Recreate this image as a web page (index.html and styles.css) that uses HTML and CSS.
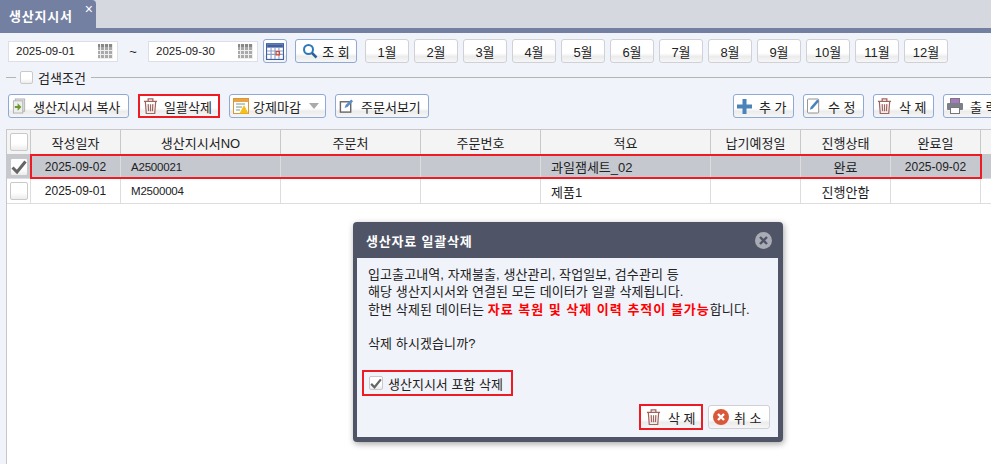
FILE: index.html
```html
<!DOCTYPE html>
<html lang="ko">
<head>
  <meta charset="UTF-8" />
  <meta name="viewport" content="width=device-width, initial-scale=1.0"/>
  <title>생산지시서</title>
  <link rel="stylesheet" href="styles.css">
</head>
<body>
  <svg class="icon-defs" width="0" height="0">
    <symbol id="i-trash" viewBox="0 0 16 18">
      <path d="M1 4h14M5.500 4V1.500h5V4M2.500 4.500l1 12.500h9l1-12.500M5.500 7l.4 7.500M8 7v7.500M10.500 7l-.4 7.500" fill="none" stroke="#a0645f" stroke-width="1.300"/>
    </symbol>
    <symbol id="i-cal" viewBox="0 0 16 16">
      <rect x="0.500" y="1.500" width="15" height="14" fill="#fff" stroke="#3f5f9f"/>
      <rect x="1" y="2" width="14" height="3" fill="#3f5f9f"/>
      <path d="M1 8h14M1 11h14M4.500 5v10M8 5v10M11.500 5v10" stroke="#8aa0c8" stroke-width="1"/>
      <rect x="9" y="8.500" width="3" height="3" fill="none" stroke="#d9472b"/>
    </symbol>
    <symbol id="i-edit" viewBox="0 0 16 16">
      <rect x="1.500" y="3.500" width="11" height="11" fill="#fff" stroke="#666" stroke-width="1.500"/>
      <path d="M6 10l1-3 6-6 2 2-6 6z" fill="#5b8dc9"/>
    </symbol>
    <symbol id="i-check" viewBox="0 0 16 14">
      <path d="M1.500 7.500l4.500 4.500L14.500 1.500" fill="none" stroke="#666" stroke-width="3"/>
    </symbol>
  </svg>

  <div class="tabbar">
    <div class="tab">생산지시서<span class="tab-close">×</span></div>
  </div>
  <div class="band"></div>

  <div class="search-row">
    <div class="date-field">2025-09-01<span class="grid-icon"></span></div>
    <span class="tilde">~</span>
    <div class="date-field">2025-09-30<span class="grid-icon"></span></div>
    <button class="btn btn-cal"><svg width="18" height="18"><use href="#i-cal"/></svg></button>
    <button class="btn btn-query">
      <svg width="16" height="16" viewBox="0 0 16 16"><circle cx="6.500" cy="6.500" r="4.500" fill="#fff" stroke="#2f78b7" stroke-width="2"/><path d="M10 10l4.500 4.500" stroke="#2f5f97" stroke-width="2.500"/></svg>
      조 회
    </button>
    <div class="months">
      <button class="btn month">1월</button>
      <button class="btn month">2월</button>
      <button class="btn month">3월</button>
      <button class="btn month">4월</button>
      <button class="btn month">5월</button>
      <button class="btn month">6월</button>
      <button class="btn month">7월</button>
      <button class="btn month">8월</button>
      <button class="btn month">9월</button>
      <button class="btn month">10월</button>
      <button class="btn month">11월</button>
      <button class="btn month">12월</button>
    </div>
  </div>

  <div class="condition">
    <span class="box"></span>
    <span>검색조건</span>
    <span class="condition-line"></span>
  </div>

  <div class="toolbar">
    <button class="btn tool w-copy">
      <svg width="15" height="16" viewBox="0 0 16 16"><rect x="3.500" y="0.500" width="10" height="13" fill="#e4e4e4" stroke="#b0b0b0"/><rect x="1.500" y="2.500" width="10" height="13" fill="#eee" stroke="#b0b0b0"/><path d="M3 8h3V5l4 4-4 4v-3H3z" fill="#6a9a2c"/></svg>
      생산지시서 복사
    </button>
    <button class="btn tool w-bulk marked"><svg width="15" height="18"><use href="#i-trash"/></svg>일괄삭제</button>
    <button class="btn tool w-close">
      <svg width="16" height="16" viewBox="0 0 16 16"><rect x="0.500" y="0.500" width="15" height="15" fill="#fff" stroke="#d9963a"/><rect x="1" y="1" width="14" height="3" fill="#e8a548"/><path d="M3 6h9M3 9h6M3 12h4" stroke="#7f9a80"/><path d="M11 7l4.500 8.500h-9z" fill="#f2c21a"/></svg>
      강제마감<span class="caret"></span>
    </button>
    <button class="btn tool w-order"><svg width="15" height="16"><use href="#i-edit"/></svg>주문서보기</button>
    <div class="toolbar-right">
      <button class="btn tool w-side">
        <svg width="15" height="15" viewBox="0 0 15 15"><path d="M5.500 0h4v5.500H15v4H9.500V15h-4V9.500H0v-4h5.500z" fill="#4a83ba"/></svg>
        추 가
      </button>
      <button class="btn tool w-side">
        <svg width="14" height="16" viewBox="0 0 15 16"><rect x="0.500" y="0.500" width="12" height="15" rx="1" fill="#fff" stroke="#8a8a8a"/><path d="M3 12l1-3 7-8 2 2-7 8z" fill="#4a83ba"/></svg>
        수 정
      </button>
      <button class="btn tool w-side"><svg width="15" height="18"><use href="#i-trash"/></svg>삭 제</button>
      <button class="btn tool w-print">
        <svg width="16" height="16" viewBox="0 0 16 16"><rect x="3.500" y="0.500" width="9" height="5" fill="#a878c0" stroke="#777"/><rect x="0" y="5" width="16" height="7" rx="1" fill="#7b7f88"/><rect x="3.500" y="9.500" width="9" height="6" fill="#fff" stroke="#777"/></svg>
        출 력
      </button>
    </div>
  </div>

  <div class="grid">
    <div class="row head">
      <div class="check-cell"><span class="box"></span></div>
      <div class="cells">
        <div class="cell c-date">작성일자</div>
        <div class="cell c-no">생산지시서NO</div>
        <div class="cell c-client">주문처</div>
        <div class="cell c-order">주문번호</div>
        <div class="cell c-memo">적요</div>
        <div class="cell c-due">납기예정일</div>
        <div class="cell c-state">진행상태</div>
        <div class="cell c-end">완료일</div>
      </div>
    </div>
    <div class="row selected">
      <div class="check-cell"><span class="box"><svg width="22" height="18"><use href="#i-check"/></svg></span></div>
      <div class="cells marked-row">
        <div class="cell c-date num">2025-09-02</div>
        <div class="cell c-no left code">A2500021</div>
        <div class="cell c-client"></div>
        <div class="cell c-order"></div>
        <div class="cell c-memo left">과일잼세트_02</div>
        <div class="cell c-due"></div>
        <div class="cell c-state">완료</div>
        <div class="cell c-end num">2025-09-02</div>
      </div>
    </div>
    <div class="row">
      <div class="check-cell"><span class="box"></span></div>
      <div class="cells">
        <div class="cell c-date num">2025-09-01</div>
        <div class="cell c-no left code">M2500004</div>
        <div class="cell c-client"></div>
        <div class="cell c-order"></div>
        <div class="cell c-memo left">제품1</div>
        <div class="cell c-due"></div>
        <div class="cell c-state">진행안함</div>
        <div class="cell c-end"></div>
      </div>
    </div>
  </div>

  <div class="dialog">
    <div class="dialog-head">
      <span>생산자료 일괄삭제</span>
      <svg width="17" height="17" viewBox="0 0 17 17"><circle cx="8.500" cy="8.500" r="8.500" fill="#a9abb5"/><path d="M5 5l7 7M12 5l-7 7" stroke="#4f5567" stroke-width="2.400"/></svg>
    </div>
    <div class="dialog-body">
      <p class="message">입고출고내역, 자재불출, 생산관리, 작업일보, 검수관리 등<br>
      해당 생산지시서와 연결된 모든 데이터가 일괄 삭제됩니다.<br>
      한번 삭제된 데이터는 <b class="warn">자료 복원 및 삭제 이력 추적이 불가능</b>합니다.<br>
      <br>
      삭제 하시겠습니까?</p>
      <label class="include">
        <span class="box small"><svg width="17" height="15"><use href="#i-check"/></svg></span>
        생산지시서 포함 삭제
      </label>
      <div class="dialog-foot">
        <button class="btn plain marked"><svg width="15" height="18"><use href="#i-trash"/></svg>삭 제</button>
        <button class="btn plain">
          <svg width="16" height="16" viewBox="0 0 16 16"><circle cx="8" cy="8" r="8" fill="#d9583a"/><path d="M5 5l6 6M11 5l-6 6" stroke="#fff" stroke-width="2.400"/></svg>
          취 소
        </button>
      </div>
    </div>
  </div>
</body>
</html>
```

FILE: styles.css
```css
html, body {
  height: 100%;
}

body {
  margin: 0;
  overflow: hidden;
  background-color: #f0f3f9;
  color: #222;
  font-family: "Liberation Sans", "Noto Sans CJK KR", sans-serif;
  font-size: 13px;
  position: relative;
  display: flex;
  flex-direction: column;
}

.icon-defs {
  position: absolute;
}

.tabbar {
  height: 28px;
  background-color: #d6d8e0;
  flex: none;
}

.tab {
  width: 96px;
  height: 28px;
  box-sizing: border-box;
  padding: 6px 0 0 9px;
  background-color: #7480a2;
  border-top-right-radius: 4px;
  color: #fff;
  font-weight: bold;
  letter-spacing: 0.8px;
  position: relative;
}

.tab-close {
  position: absolute;
  top: 0;
  right: 3px;
  font-size: 14px;
  font-weight: normal;
  letter-spacing: 0;
  line-height: 18px;
}

.band {
  height: 5px;
  background-color: #7480a2;
  flex: none;
}

.btn {
  display: flex;
  align-items: center;
  justify-content: center;
  gap: 5px;
  height: 24px;
  padding: 0;
  box-sizing: border-box;
  border: 1px solid #8fa9d4;
  border-radius: 3px;
  background: linear-gradient(180deg, #fff 0%, #fff 60%, #ececec 75%, #f6f6f6 100%);
  color: #222;
  font: inherit;
  white-space: nowrap;
}

.search-row {
  display: flex;
  align-items: center;
  padding: 6px 0 0 8px;
  height: 24px;
  flex: none;
}

.date-field {
  width: 110px;
  height: 21px;
  box-sizing: border-box;
  display: flex;
  align-items: center;
  justify-content: space-between;
  padding: 0 4px 0 7px;
  background-color: #fff;
  border: 1px solid #dcdfe6;
  font-size: 11.500px;
}

.grid-icon {
  width: 15px;
  height: 15px;
  background-color: #a9a9a9;
  background-image:
    linear-gradient(90deg, transparent 2px, #eee 2px, #eee 3px, transparent 3px),
    linear-gradient(180deg, #888 3px, transparent 3px),
    linear-gradient(180deg, transparent 2px, #eee 2px, #eee 3px, transparent 3px);
  background-size: 4px 100%, 100% 100%, 100% 4px;
}

.tilde {
  width: 30px;
  text-align: center;
}

.btn-cal {
  width: 24px;
  margin-left: 5px;
}

.btn-query {
  width: 62px;
  margin-left: 8px;
  gap: 4px;
}

.months {
  display: flex;
  gap: 5px;
  margin-left: 8px;
}

.month {
  width: 44px;
  border-color: #cfd1d6;
}

.box {
  display: inline-flex;
  align-items: center;
  justify-content: center;
  width: 17px;
  height: 17px;
  flex: none;
  box-sizing: border-box;
  background: linear-gradient(180deg, #fff 60%, #ececec 100%);
  border: 1px solid #c9c9c9;
  border-radius: 2px;
}

.condition {
  display: flex;
  align-items: center;
  gap: 5px;
  height: 17px;
  margin-top: 6px;
  margin-left: 20px;
  position: relative;
  flex: none;
}

.condition::before {
  content: "";
  position: absolute;
  left: -14px;
  top: 8px;
  width: 10px;
  height: 1px;
  background-color: #b5b5b5;
}

.condition .box {
  width: 13px;
  height: 13px;
}

.condition-line {
  flex: 1;
  height: 1px;
  background-color: #b5b5b5;
}

.toolbar {
  display: flex;
  gap: 9px;
  padding-left: 8px;
  margin-top: 8px;
  flex: none;
}

.tool {
  flex: none;
  justify-content: flex-start;
  padding-left: 3px;
  gap: 7px;
}

.toolbar-right {
  display: flex;
  gap: 9px;
  margin-left: auto;
  margin-right: -14px;
}

.w-copy { width: 121px; gap: 6px; }
.w-bulk { width: 82px; gap: 6px; }
.w-close { width: 97px; gap: 4px; }
.w-order { width: 94px; }
.w-side { width: 61px; }
.w-print { width: 62px; }

.caret {
  width: 0;
  height: 0;
  margin-left: 4px;
  border-style: solid;
  border-width: 6px 5px 0;
  border-color: #aaa transparent transparent;
}

.marked {
  border: 2px solid #ed1c24;
  border-radius: 0;
}

.grid {
  flex: 1;
  margin: 11px 0 0 6px;
  background-color: #fff;
  border-top: 1px solid #c8c8c8;
  border-left: 1px solid #c8c8c8;
}

.row {
  display: flex;
  height: 25px;
  border-bottom: 1px solid #ddd;
  box-sizing: border-box;
}

.head {
  background-color: #f4f4f4;
  border-bottom-color: #c8c8c8;
}

.selected {
  height: 24px;
  background-color: #c6c8cf;
}

.check-cell {
  width: 23px;
  flex: none;
  display: flex;
  align-items: center;
  justify-content: center;
  border-right: 1px solid #ddd;
}

.head .check-cell,
.head .cell {
  border-right-color: #c8c8c8;
}

.check-cell .box {
  width: 18px;
  height: 18px;
  overflow: visible;
}

.cells {
  display: flex;
  flex: 1;
}

.marked-row {
  outline: 2px solid #ed1c24;
  outline-offset: -1px;
  flex: none;
  width: 950px;
}

.cell {
  flex: none;
  box-sizing: border-box;
  display: flex;
  align-items: center;
  justify-content: center;
  border-right: 1px solid #ddd;
  white-space: nowrap;
}

.left {
  justify-content: flex-start;
  padding-left: 10px;
}

.num {
  font-size: 12px;
}

.code {
  font-size: 11.500px;
  letter-spacing: -0.2px;
}

.c-date { width: 90px; }
.c-no { width: 160px; }
.c-client { width: 140px; }
.c-order { width: 120px; }
.c-memo { width: 170px; }
.c-due { width: 90px; }
.c-state { width: 90px; }
.c-end { width: 90px; }

.dialog {
  position: absolute;
  left: 353px;
  top: 222px;
  width: 430px;
  height: 220px;
  box-sizing: border-box;
  padding: 0 5px 5px 4px;
  display: flex;
  flex-direction: column;
  background-color: #4f5567;
  border-radius: 4px;
  box-shadow: 1px 2px 6px rgba(0, 0, 0, 0.35);
}

.dialog-head {
  height: 36px;
  flex: none;
  display: flex;
  align-items: center;
  justify-content: space-between;
  padding: 0 6px 0 9px;
  color: #fff;
  font-weight: bold;
  letter-spacing: 0.8px;
}

.dialog-body {
  flex: 1;
  display: flex;
  flex-direction: column;
  padding: 8px 8px 7px 11px;
  background-color: #f0f3f9;
}

.message {
  margin: 0;
  line-height: 17.250px;
  letter-spacing: 0.1px;
}

.warn {
  color: #ff0000;
  letter-spacing: 1px;
}

.include {
  display: flex;
  align-items: center;
  gap: 5px;
  align-self: flex-start;
  width: 151px;
  height: 26px;
  box-sizing: border-box;
  margin: 18px 0 0 -6px;
  padding-left: 5px;
  border: 2px solid #ed1c24;
}

.box.small {
  width: 14px;
  height: 14px;
  overflow: visible;
}

.dialog-foot {
  display: flex;
  justify-content: flex-end;
  align-items: center;
  gap: 5px;
  margin-top: auto;
}

.plain {
  width: 62px;
  border-color: #cfd1d6;
  justify-content: flex-start;
  padding-left: 4px;
}

.plain.marked {
  width: 64px;
  height: 26px;
  padding-left: 5px;
  gap: 7px;
  border-color: #ed1c24;
}
```
